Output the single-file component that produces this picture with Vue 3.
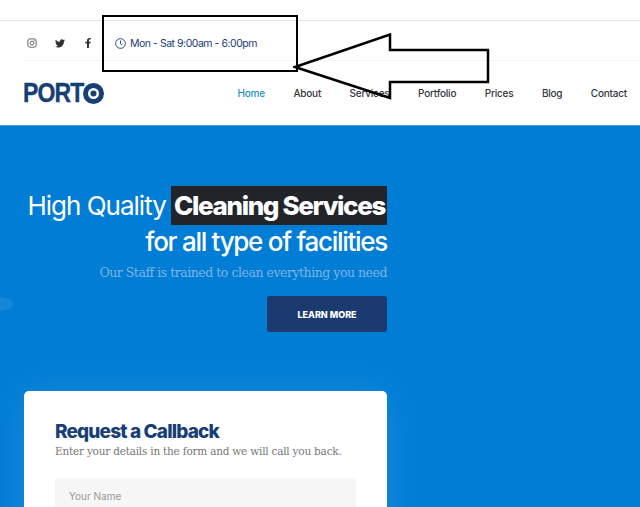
<template>
  <div class="page">
    <header class="header">
      <div class="topbar">
        <div class="topbar-inner">
          <a class="social">
            <svg width="10" height="10" viewBox="0 0 12 12" fill="none" stroke="#666" stroke-width="1.2">
              <rect x="1" y="1" width="10" height="10" rx="2.6" />
              <circle cx="6" cy="6" r="2.3" />
              <circle cx="9" cy="3" r=".4" fill="#666" stroke-width=".5" />
            </svg>
          </a>
          <a class="social">
            <svg width="10" height="9" viewBox="0 0 24 20" fill="#333">
              <path d="M24 2.4c-.9.4-1.8.7-2.8.8 1-.6 1.8-1.600 2.200-2.700-1 .6-2 1-3.100 1.200C19.300.7 18 0 16.600 0c-2.700 0-4.900 2.200-4.900 4.900 0 .4 0 .8.1 1.100C7.700 5.800 4.100 3.900 1.700.9c-.4.7-.7 1.600-.7 2.500 0 1.700.9 3.200 2.200 4.100-.8 0-1.600-.2-2.200-.6v.1c0 2.400 1.700 4.400 3.900 4.800-.4.1-.8.2-1.300.2-.3 0-.6 0-.9-.1.6 2 2.400 3.400 4.600 3.400-1.700 1.300-3.800 2.100-6.100 2.100-.4 0-.8 0-1.200-.1 2.200 1.400 4.800 2.200 7.500 2.200 9.100 0 14-7.500 14-14v-.6c1-.7 1.800-1.500 2.500-2.200z" />
            </svg>
          </a>
          <a class="social">
            <svg width="6" height="10" viewBox="0 0 10 18" fill="#333">
              <path d="M9.300 10l.5-3.300H6.700V4.600c0-.9.4-1.800 1.900-1.800h1.400V.2S8.700 0 7.500 0C4.900 0 3.200 1.600 3.200 4.400v2.300H.3V10h2.900v8h3.500v-8z" />
            </svg>
          </a>
          <span class="hours">
            <svg width="11" height="11" viewBox="0 0 12 12" fill="none" stroke="#1a3d73" stroke-width="1">
              <circle cx="6" cy="6" r="5.3" />
              <path d="M6 2.800V6.300L8 7.600" />
            </svg>
            Mon - Sat 9:00am - 6:00pm
          </span>
        </div>
      </div>
      <div class="navbar">
        <div class="logo">
          <span class="logo-text">PORT</span>
          <svg width="21" height="21" viewBox="0 0 21 21">
            <circle cx="10.5" cy="10.5" r="8" fill="none" stroke="#173f75" stroke-width="5" />
            <circle cx="10.5" cy="10.5" r="3" fill="#173f75" />
          </svg>
        </div>
        <nav class="nav">
          <a v-for="item in navItems" :key="item" :class="{ active: item === 'Home' }">{{ item }}</a>
        </nav>
      </div>
    </header>

    <section class="hero">
      <span class="blob"></span>
      <div class="hero-col">
        <h1 class="title">
          <span class="title-line">High Quality <strong>Cleaning Services</strong></span>
          <span class="title-line second">for all type of facilities</span>
        </h1>
        <p class="lead">Our Staff is trained to clean everything you need</p>
        <button class="cta">LEARN MORE</button>

        <div class="card">
          <h2>Request a Callback</h2>
          <p>Enter your details in the form and we will call you back.</p>
          <div class="field">Your Name</div>
        </div>
      </div>
    </section>

    <!-- annotation drawn over the screenshot -->
    <div class="note-box"></div>
    <svg class="note-arrow" width="200" height="70" viewBox="0 0 200 70" fill="none" stroke="#000" stroke-width="2.5">
      <path d="M2 34 L97 1.500 L97 17 L195 17 L195 49 L97 49 L97 65 Z" />
    </svg>
  </div>
</template>

<script setup>
const navItems = ['Home', 'About', 'Services', 'Portfolio', 'Prices', 'Blog', 'Contact']
</script>

<style>
html, body { margin: 0; background: #fff; overflow: hidden; }
</style>

<style scoped>
.page { position: relative; width: 640px; height: 507px; overflow: hidden; font-family: Inter, "Liberation Sans", sans-serif; }
.header { background: #fff; padding-top: 20px; height: 105px; }
.topbar { border-top: 1px solid #e3e3e3; padding: 0 0 0 24px; }
.topbar-inner { display: flex; align-items: center; box-sizing: border-box; height: 40px; padding-top: 5px; border-bottom: 1px solid #f4f4f4; }
.social { display: flex; justify-content: center; width: 16px; margin-right: 12px; }
.hours { display: flex; align-items: center; gap: 4px; margin-left: 7px; font-size: 10.5px; letter-spacing: -.47px; color: #1a3d73; white-space: nowrap; }
.navbar { display: flex; align-items: center; justify-content: space-between; height: 64px; padding: 0 13px 0 23px; }
.logo { display: flex; align-items: center; font-family: "Liberation Sans", sans-serif; font-size: 28px; font-weight: 700; color: #173f75; letter-spacing: -1px; }
.logo-text { display: inline-block; margin-right: -14px; transform: scaleX(.82); transform-origin: left center; -webkit-text-stroke: .4px #173f75; }
.nav { display: flex; gap: 28.5px; }
.nav a { font-size: 10px; font-weight: 500; letter-spacing: -.22px; color: #33363b; }
.nav a.active { color: #1b8fc4; }
.hero { position: relative; box-sizing: border-box; height: 382px; background: #017dd6; border-top: 1px solid #3f9be0; padding: 60px 0 0 24px; }
.blob { position: absolute; left: -12px; top: 171px; width: 25px; height: 14px; border-radius: 50%; background: rgba(255, 255, 255, .08); }
.hero-col { width: 363px; display: flex; flex-direction: column; align-items: flex-end; }
.title { margin: 0; font-size: 26px; font-weight: 400; color: #fff; text-align: right; letter-spacing: -1px; white-space: nowrap; }
.title-line { display: block; line-height: 39px; }
.title-line.second { font-weight: 500; line-height: 34px; letter-spacing: -1.29px; }
.title strong { display: inline-block; padding: 0 2px 0 3px; margin-left: -1px; background: #212529; font-weight: 800; line-height: 39px; letter-spacing: -1.36px; }
.lead { margin: 6px 0 0; font-family: "DejaVu Serif", serif; font-size: 12.5px; letter-spacing: -.47px; color: #7cb4e6; white-space: nowrap; }
.cta { width: 120px; height: 36px; margin-top: 16px; border: 0; border-radius: 3px; background: #1a3a70; color: #fff; font-family: inherit; font-size: 9px; font-weight: 800; }
.card { box-sizing: border-box; width: 363px; height: 200px; margin-top: 59px; padding: 29px 31px; border-radius: 5px; background: #fff; box-shadow: 0 0 40px rgba(255, 255, 255, .1); }
.card h2 { margin: 0; font-size: 19px; font-weight: 800; color: #173f75; letter-spacing: -.85px; }
.card p { margin: 2px 0 0; font-family: "DejaVu Serif", serif; font-size: 10.5px; letter-spacing: -.22px; color: #777; white-space: nowrap; }
.field { height: 36px; margin-top: 21px; padding-left: 14px; line-height: 36px; border-radius: 3px; background: #f6f6f6; font-size: 10px; color: #999; }
.note-box { position: absolute; left: 102px; top: 15px; width: 192px; height: 53px; border: 2px solid #000; }
.note-arrow { position: absolute; left: 293px; top: 33px; }
</style>
